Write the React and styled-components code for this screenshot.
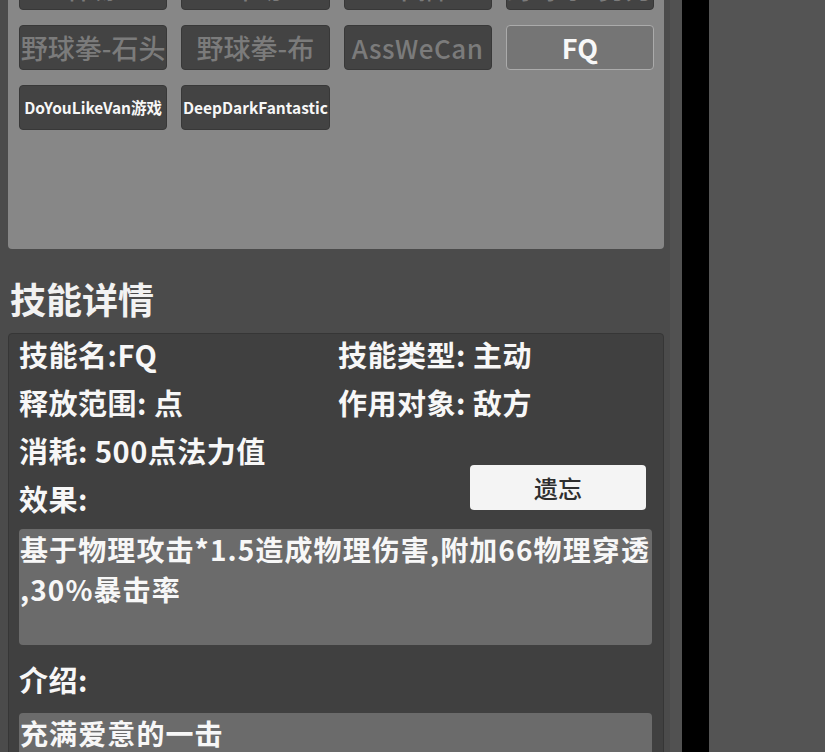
import React from 'react';
import styled, { createGlobalStyle } from 'styled-components';

const Global = createGlobalStyle`
  html, body { margin: 0; padding: 0; height: 100%; overflow: hidden; background: #545454; }
  body { font-family: "Noto Sans CJK SC", "Noto Sans", sans-serif; }
  #root { height: 100%; }
`;

const Screen = styled.div`
  display: flex;
  width: 825px;
  height: 752px;
  overflow: hidden;
`;

const LeftPane = styled.div`
  display: flex;
  flex: none;
  width: 682px;
  background: #4b4b4b;
`;

const Content = styled.div`
  flex: none;
  width: 656px;
  padding: 0 6px 0 8px;
`;

const Gutter = styled.div`
  flex: none;
  width: 12px;
  background: #515151;
`;

const Divider = styled.div`
  flex: none;
  width: 27px;
  background: #000;
`;

const RightPane = styled.div`
  flex: 1;
  background: #545454;
`;

const SkillPanel = styled.div`
  box-sizing: border-box;
  margin-top: -46px;
  height: 295px;
  background: #878787;
  border-radius: 4px;
  padding: 11px 10px 0 11px;
  display: grid;
  grid-template-columns: repeat(4, 1fr);
  grid-auto-rows: 45px;
  column-gap: 14px;
  row-gap: 15px;
  align-content: start;
`;

const SkillButton = styled.button`
  appearance: none;
  box-sizing: border-box;
  margin: 0;
  padding: 0;
  display: flex;
  align-items: center;
  justify-content: center;
  overflow: hidden;
  white-space: nowrap;
  border-radius: 4px;
  font-family: inherit;
  line-height: 1;
  background: ${p => (p.$selected ? '#757575' : '#434343')};
  border: 1px solid ${p => (p.$selected ? '#ababab' : '#383838')};
  color: ${p => (p.$dim ? '#7b7b7b' : '#f7f7f7')};
  font-size: ${p => p.$size || 27}px;
  font-weight: ${p => (p.$dim ? 500 : 600)};
  letter-spacing: ${p => p.$spacing || 0}px;
`;

const SectionTitle = styled.h2`
  margin: 32px 0 17px 2px;
  font-size: 36px;
  line-height: 35px;
  font-weight: 600;
  color: #f2f2f2;
`;

const DetailPanel = styled.div`
  background: #404040;
  border: 1px solid #363636;
  border-radius: 4px;
  padding: 2px 11px 40px 10px;
`;

const InfoGrid = styled.div`
  display: grid;
  grid-template-columns: 319px 1fr;
  grid-template-rows: repeat(4, 36px);
  row-gap: 12px;
`;

const Field = styled.div`
  grid-column: ${p => p.$col || 'auto'};
  grid-row: ${p => p.$row || 'auto'};
  font-size: 29px;
  line-height: 36px;
  font-weight: 600;
  color: #f7f7f7;
  white-space: nowrap;
  letter-spacing: 0.5px;
`;

const ForgetButton = styled.button`
  appearance: none;
  grid-column: 2;
  grid-row: 3 / 5;
  align-self: end;
  justify-self: end;
  box-sizing: border-box;
  width: 176px;
  height: 45px;
  margin: 0 6px 6px 0;
  padding: 0;
  border: none;
  border-radius: 4px;
  background: #f4f4f4;
  color: #2e2e2e;
  font-family: inherit;
  font-size: 24px;
  font-weight: 500;
  line-height: 1;
`;

const TextBox = styled.div`
  box-sizing: border-box;
  height: 116px;
  margin-top: ${p => p.$top || 0}px;
  padding: 0 0 0 1px;
  background: #6b6b6b;
  border-radius: 4px;
  font-size: 28px;
  line-height: 40px;
  font-weight: 600;
  color: #f7f7f7;
  white-space: nowrap;
  overflow: hidden;
  letter-spacing: 1.1px;
`;

const BoxLabel = styled(Field)`
  margin-top: 16px;
`;

const skills = [
  { name: '保镖', dim: true },
  { name: '冲动', dim: true },
  { name: '中插', dim: true },
  { name: '野球拳-剪刀', dim: true },
  { name: '野球拳-石头', dim: true },
  { name: '野球拳-布', dim: true },
  { name: 'AssWeCan', dim: true, size: 26, spacing: 0.5 },
  { name: 'FQ', selected: true, size: 27 },
  { name: 'DoYouLikeVan游戏', size: 15.5 },
  { name: 'DeepDarkFantastic', size: 15.5 },
];

export default function App() {
  return (
    <>
      <Global />
      <Screen>
        <LeftPane>
          <Content>
            <SkillPanel>
              {skills.map(s => (
                <SkillButton
                  key={s.name}
                  $dim={s.dim}
                  $selected={s.selected}
                  $size={s.size}
                  $spacing={s.spacing}
                >
                  {s.name}
                </SkillButton>
              ))}
            </SkillPanel>
            <SectionTitle>技能详情</SectionTitle>
            <DetailPanel>
              <InfoGrid>
                <Field>技能名:FQ</Field>
                <Field>技能类型: 主动</Field>
                <Field>释放范围: 点</Field>
                <Field>作用对象: 敌方</Field>
                <Field $col={1} $row={3}>消耗: 500点法力值</Field>
                <Field $col={1} $row={4}>效果:</Field>
                <ForgetButton>遗忘</ForgetButton>
              </InfoGrid>
              <TextBox $top={13}>
                基于物理攻击*1.5造成物理伤害,附加66物理穿透
                <br />
                ,30%暴击率
              </TextBox>
              <BoxLabel>介绍:</BoxLabel>
              <TextBox $top={16}>充满爱意的一击</TextBox>
            </DetailPanel>
          </Content>
          <Gutter />
        </LeftPane>
        <Divider />
        <RightPane />
      </Screen>
    </>
  );
}
